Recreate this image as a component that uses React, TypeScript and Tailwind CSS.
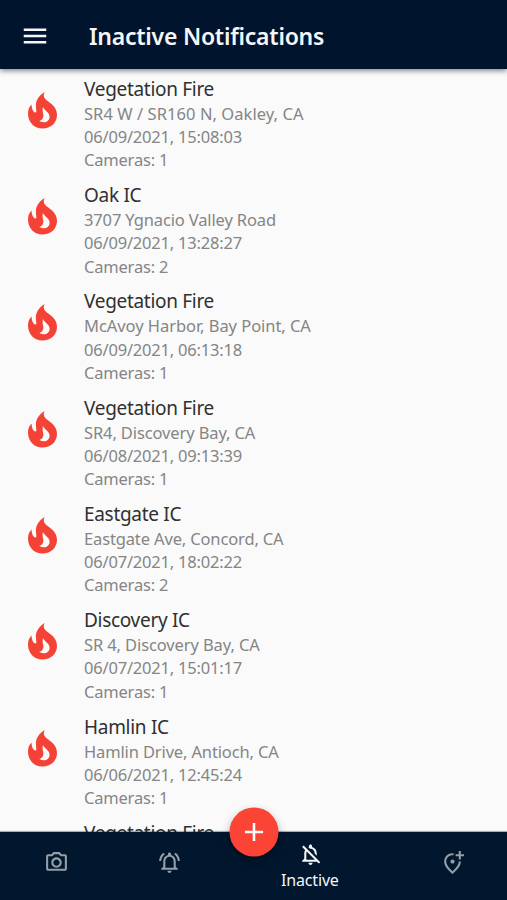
import React from "react";
import {
  MdAdd,
  MdMenu,
  MdOutlineAddLocationAlt,
  MdOutlineNotificationsActive,
  MdOutlineNotificationsOff,
  MdOutlinePhotoCamera,
} from "react-icons/md";

type Incident = {
  title: string;
  location: string;
  time: string;
  cameras: number;
  tracking: string;
};

const incidents: Incident[] = [
  {
    title: "Vegetation Fire",
    location: "SR4 W / SR160 N, Oakley, CA",
    time: "06/09/2021, 15:08:03",
    cameras: 1,
    tracking: "tracking-[0.06px]",
  },
  {
    title: "Oak IC",
    location: "3707 Ygnacio Valley Road",
    time: "06/09/2021, 13:28:27",
    cameras: 2,
    tracking: "tracking-[-0.14px]",
  },
  {
    title: "Vegetation Fire",
    location: "McAvoy Harbor, Bay Point, CA",
    time: "06/09/2021, 06:13:18",
    cameras: 1,
    tracking: "tracking-[-0.05px]",
  },
  {
    title: "Vegetation Fire",
    location: "SR4, Discovery Bay, CA",
    time: "06/08/2021, 09:13:39",
    cameras: 1,
    tracking: "tracking-[-0.12px]",
  },
  {
    title: "Eastgate IC",
    location: "Eastgate Ave, Concord, CA",
    time: "06/07/2021, 18:02:22",
    cameras: 2,
    tracking: "tracking-[-0.14px]",
  },
  {
    title: "Discovery IC",
    location: "SR 4, Discovery Bay, CA",
    time: "06/07/2021, 15:01:17",
    cameras: 1,
    tracking: "tracking-[-0.11px]",
  },
  {
    title: "Hamlin IC",
    location: "Hamlin Drive, Antioch, CA",
    time: "06/06/2021, 12:45:24",
    cameras: 1,
    tracking: "tracking-[-0.14px]",
  },
];

const FireIcon = () => (
  <svg
    viewBox="0 0 29 37"
    fill="currentColor"
    fillRule="evenodd"
    className="h-[37px] w-[29px]"
  >
    <path d="M16.8 0C11 3.2 7.6 8.6 7.9 14.2C7.9 16 8.3 17.6 8.4 19.2C8.3 20.4 7 20.8 6.1 20C4.2 18.2 3.4 15.4 3.7 12.6C1.2 14.6 0 17.8 0 21.8C0.2 30.6 6.4 36.6 14.5 36.6C22.8 36.6 29 30.7 29 23C29 18.6 27 15.2 23.8 12.3C20.5 9.3 16.6 7.6 15.9 4.2C15.6 2.6 16 1.2 16.8 0ZM15 15C16.8 19 21.6 20.2 21.6 25C21.4 29.6 16.4 32 11.3 29C14.6 28 15.9 25.2 15.2 22C14.7 19.6 14.2 17.6 15 15Z" />
  </svg>
);

const IncidentRow = ({ incident }: { incident: Incident }) => (
  <li className="flex h-[106.3px] shrink-0 pl-[27.5px]">
    <div className="w-[56.5px] shrink-0 pt-[16px] text-[#f44336]">
      <FireIcon />
    </div>
    <div className="whitespace-nowrap text-[16.5px] leading-[23.2px] tracking-[-0.2px] text-[#858585]">
      <h2 className="text-[19px] leading-[26px] tracking-[-0.3px] text-[#303030]">
        {incident.title}
      </h2>
      <p className={incident.tracking}>{incident.location}</p>
      <p>{incident.time}</p>
      <p>Cameras: {incident.cameras}</p>
    </div>
  </li>
);

const App = () => {
  return (
    <div className="flex h-[900px] w-[507px] flex-col overflow-hidden bg-[#fafafa] font-['Noto_Sans','Open_Sans',sans-serif]">
      {/* App Bar */}
      <header className="relative z-10 flex h-[69px] shrink-0 items-center bg-[#00152d] pl-5 pt-[3px] text-[#f4f6f8] shadow-[0_2px_5px_rgba(0,0,0,0.45)]">
        <button aria-label="Menu">
          <MdMenu className="size-[30px]" />
        </button>
        <h1 className="ml-[39px] whitespace-nowrap text-[23px] font-semibold tracking-[-0.24px]">
          Inactive Notifications
        </h1>
      </header>
      {/* Incident List */}
      <ul className="flex min-h-0 flex-1 flex-col overflow-hidden pt-[6.8px]">
        {incidents.map((incident) => (
          <IncidentRow key={incident.time} incident={incident} />
        ))}
        <li className="shrink-0 pl-[84px] text-[19px] leading-[26px] tracking-[-0.3px] text-[#303030]">
          Vegetation Fire
        </li>
      </ul>
      {/* Bottom Navigation */}
      <nav className="relative flex h-[68px] shrink-0 bg-[#00172e] text-[#969ea7] shadow-[0_-1px_1px_rgba(0,0,0,0.3)]">
        <button
          aria-label="Cameras"
          className="flex flex-1 items-center justify-center pb-[7px]"
        >
          <MdOutlinePhotoCamera className="ml-px size-[25px]" />
        </button>
        <button
          aria-label="Active"
          className="flex flex-1 items-center justify-center pb-[7px]"
        >
          <MdOutlineNotificationsActive className="ml-px size-[25px]" />
        </button>
        <button className="flex flex-[1.5] flex-col items-center pt-[10px] text-[#f4f6f8]">
          <MdOutlineNotificationsOff className="ml-[2px] size-[25px]" />
          <span className="pt-px text-[16px] leading-6 tracking-[-0.15px]">
            Inactive
          </span>
        </button>
        <button
          aria-label="Add location"
          className="flex flex-1 items-center justify-center pb-[7px]"
        >
          <MdOutlineAddLocationAlt className="ml-[3px] size-[25px]" />
        </button>
        <button
          aria-label="Add"
          className="absolute left-1/2 top-0 flex size-[49px] -translate-x-1/2 -translate-y-1/2 items-center justify-center rounded-full bg-[#fb4336] text-white shadow-[0_4px_8px_rgba(0,0,0,0.35)]"
        >
          <MdAdd className="size-[31px]" />
        </button>
      </nav>
    </div>
  );
};

export default App;
